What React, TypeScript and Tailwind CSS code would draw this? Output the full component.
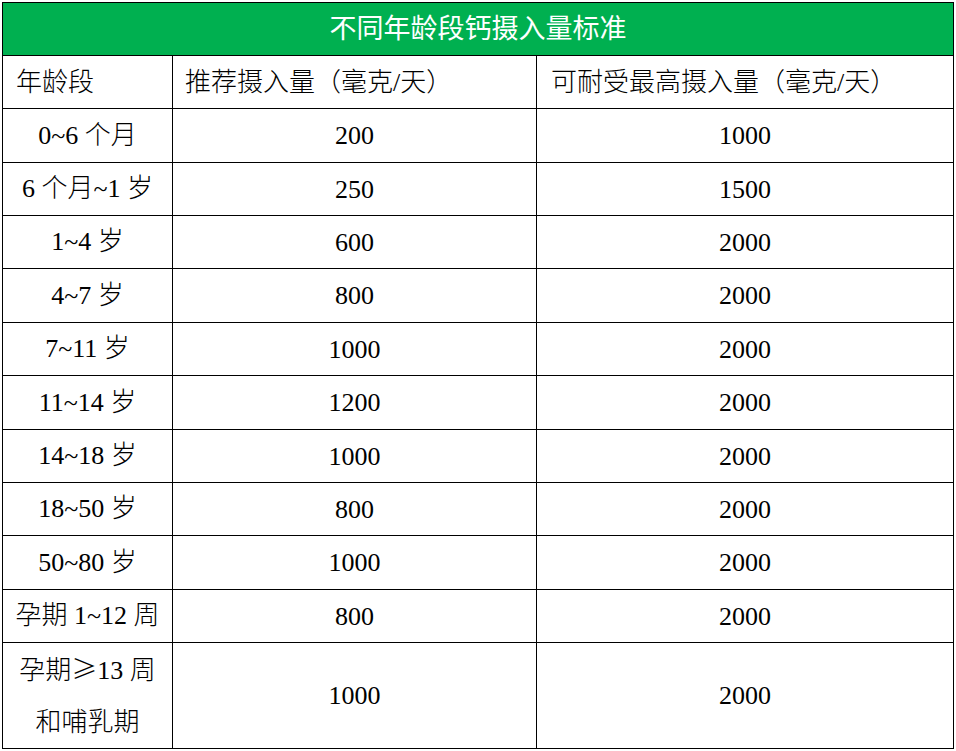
import React from "react";

const cjk = { fontFamily: '"Noto Sans CJK SC", sans-serif' };

const rows: [React.ReactNode[], string, string][] = [
  [["0~6 个月"], "200", "1000"],
  [["6 个月~1 岁"], "250", "1500"],
  [["1~4 岁"], "600", "2000"],
  [["4~7 岁"], "800", "2000"],
  [["7~11 岁"], "1000", "2000"],
  [["11~14 岁"], "1200", "2000"],
  [["14~18 岁"], "1000", "2000"],
  [["18~50 岁"], "800", "2000"],
  [["50~80 岁"], "1000", "2000"],
  [["孕期 1~12 周"], "800", "2000"],
  [
    [
      <>
        孕期
        <span style={cjk} className="inline-block w-[26px] text-center">≥</span>
        13 周
      </>,
      "和哺乳期",
    ],
    "1000",
    "2000",
  ],
];

export default function App() {
  return (
    <div className="w-[956px] h-[751px] bg-white pt-[2px] pl-[2px] overflow-hidden">
      <div
        className="w-[952px] bg-black p-px grid gap-px grid-cols-[169px_363px_416px] grid-rows-[52px_52px_53px_52px_52px_53px_52px_53px_52px_52px_53px_52px_105px] text-[26px] text-black"
        style={{ fontFamily: '"Liberation Serif", "Noto Sans CJK SC", serif' }}
      >
        <div className="col-span-3 bg-[#00b050] text-white text-[27px] flex items-center justify-center pt-[1px]">
          不同年龄段钙摄入量标准
        </div>
        <div className="bg-white flex items-center pl-[13px] font-light">年龄段</div>
        <div className="bg-white flex items-center pl-[12px] font-light">推荐摄入量（毫克/天）</div>
        <div className="bg-white flex items-center pl-[14px] font-light">可耐受最高摄入量（毫克/天）</div>
        {rows.map(([a, b, c], i) => (
          <React.Fragment key={i}>
            <div className="bg-white flex flex-col items-center justify-center font-light leading-[52px]">
              {a.map((t, j) => (
                <span key={j}>{t}</span>
              ))}
            </div>
            <div className="bg-white flex items-center justify-center">{b}</div>
            <div className="bg-white flex items-center justify-center">{c}</div>
          </React.Fragment>
        ))}
      </div>
    </div>
  );
}
